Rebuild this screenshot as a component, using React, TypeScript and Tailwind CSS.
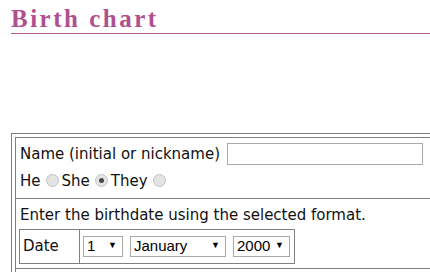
import React from 'react';

const sans = { fontFamily: '"DejaVu Sans", Verdana, sans-serif' };

function Radio({ checked }: { checked?: boolean }) {
  return (
    <span className="relative ml-[5px] mr-[3px] inline-block h-[13px] w-[13px] rounded-full border border-[#c2c2c2] bg-[#e4e4e4] align-[-1px]">
      {checked && <span className="absolute left-[3px] top-[3px] h-[5px] w-[5px] rounded-full bg-[#4a4a4a]" />}
    </span>
  );
}

function FakeSelect({ label, width }: { label: string; width: string }) {
  return (
    <span
      className={`inline-flex h-[21px] items-center justify-between border border-[#a9a9a9] bg-white pl-[3px] pr-[5px] text-[15px] text-black ${width}`}
      style={{ fontFamily: '"Liberation Sans", Arial, sans-serif' }}
    >
      <span>{label}</span>
      <span className="text-[9px]">▼</span>
    </span>
  );
}

export default function App() {
  return (
    <div className="h-[272px] w-[430px] overflow-hidden bg-white">
      <h2
        className="ml-[11px] mt-[4px] border-b border-[#b05a95] text-[25px] font-bold leading-[29px] tracking-[2.5px] text-[#b0508f]"
        style={{ fontFamily: '"Liberation Serif", "Times New Roman", serif' }}
      >
        Birth chart
      </h2>

      <div className="ml-[11px] mt-[99px] w-[440px] border border-[#808080] p-[3px] text-[15px] text-[#111]" style={sans}>
        <div className="border border-[#808080]">
          <div className="border-b border-[#808080] px-[4px] pb-[6px] pt-[5px]">
            <div className="flex items-center gap-[7px]">
              <span>Name (initial or nickname)</span>
              <span className="h-[22px] w-[196px] border border-[#a9a9a9] bg-white" />
            </div>
            <div className="mt-[4px] leading-[22px]">
              He<Radio />She<Radio checked />They<Radio />
            </div>
          </div>
          <div className="px-[3px] pb-[4px] pt-[5px]">
            <div className="pl-[1px] leading-[22px]">Enter the birthdate using the selected format.</div>
            <div className="mt-[3px] flex h-[35px] w-[276px] border border-[#808080]">
              <div className="flex w-[60px] items-center border-r border-[#808080] pl-[3px]">Date</div>
              <div className="flex items-center gap-[7px] pl-[3px]">
                <FakeSelect label="1" width="w-[40px]" />
                <FakeSelect label="January" width="w-[96px]" />
                <FakeSelect label="2000" width="w-[57px]" />
              </div>
            </div>
          </div>
          <div className="h-[20px] border-t border-[#808080]" />
        </div>
      </div>
    </div>
  );
}
